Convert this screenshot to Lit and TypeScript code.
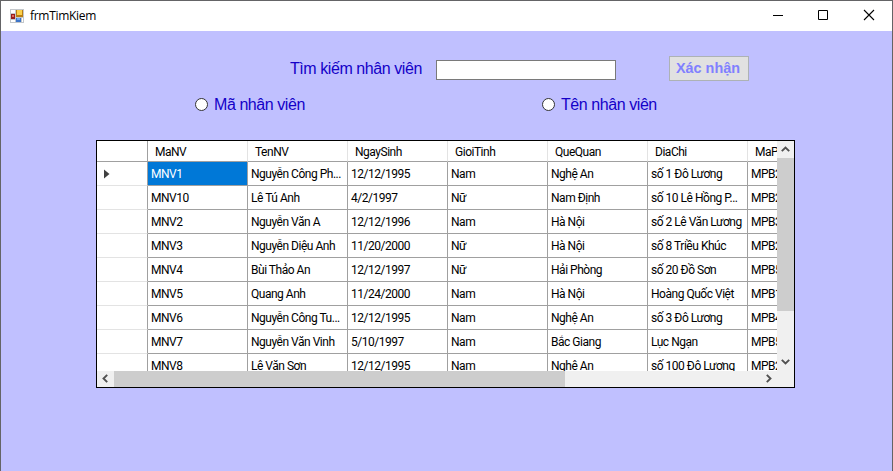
import { LitElement, html, css, svg } from "lit";
import { customElement } from "lit/decorators.js";
import { classMap } from "lit/directives/class-map.js";

const COLUMNS = ["MaNV", "TenNV", "NgaySinh", "GioiTinh", "QueQuan", "DiaChi", "MaPB"];

const ROWS = [
  ["MNV1", "Nguyễn Công Ph...", "12/12/1995", "Nam", "Nghệ An", "số 1 Đô Lương", "MPB2"],
  ["MNV10", "Lê Tú Anh", "4/2/1997", "Nữ", "Nam Định", "số 10 Lê Hồng P...", "MPB2"],
  ["MNV2", "Nguyễn Văn A", "12/12/1996", "Nam", "Hà Nội", "số 2 Lê Văn Lương", "MPB3"],
  ["MNV3", "Nguyễn Diệu Anh", "11/20/2000", "Nữ", "Hà Nội", "số 8 Triều Khúc", "MPB2"],
  ["MNV4", "Bùi Thảo An", "12/12/1997", "Nữ", "Hải Phòng", "số 20 Đồ Sơn", "MPB5"],
  ["MNV5", "Quang Anh", "11/24/2000", "Nam", "Hà Nội", "Hoàng Quốc Việt", "MPB1"],
  ["MNV6", "Nguyễn Công Tu...", "12/12/1995", "Nam", "Nghệ An", "số 3 Đô Lương", "MPB4"],
  ["MNV7", "Nguyễn Văn Vinh", "5/10/1997", "Nam", "Bắc Giang", "Lục Ngạn", "MPB5"],
  ["MNV8", "Lê Văn Sơn", "12/12/1995", "Nam", "Nghệ An", "số 100 Đô Lương", "MPB2"],
];

const CHEVRONS = {
  up: "M4.8 10.2 8.5 6.5l3.7 3.7",
  down: "M4.8 5.8l3.7 3.7 3.7-3.7",
  left: "M10.2 3.8 6.5 7.5l3.7 3.7",
  right: "M6.8 3.8l3.7 3.7-3.7 3.7",
};

@customElement("scroll-arrow")
class ScrollArrow extends LitElement {
  static properties = { dir: { type: String } };
  declare dir: keyof typeof CHEVRONS;
  static styles = css`
    :host { display: block; width: 17px; height: 17px; flex: none; }
    svg { display: block; }
  `;
  render() {
    return html`<svg width="17" height="17" viewBox="0 0 17 17">
      ${svg`<path d=${CHEVRONS[this.dir]} fill="none" stroke="#505050" stroke-width="1.9" />`}
    </svg>`;
  }
}

@customElement("data-grid")
class DataGrid extends LitElement {
  static styles = css`
    :host {
      display: grid;
      grid-template: 230px 16px / 680px 17px;
      width: 699px;
      height: 248px;
      box-sizing: border-box;
      border: 1px solid #000;
      background: #f0f0f0;
      font: 12px/25px Roboto, "Noto Sans", sans-serif;
      letter-spacing: -0.48px;
      color: #000;
    }
    .view { overflow: hidden; background: #fff; }
    .row {
      display: grid;
      grid-template-columns: 51px repeat(7, 100px);
      width: 751px;
      height: 24px;
    }
    .cell, .stub {
      box-sizing: border-box;
      border-right: 1px solid #a0a0a0;
      border-bottom: 1px solid #a0a0a0;
      white-space: nowrap;
      overflow: hidden;
      padding-left: 3px;
    }
    .stub { border-bottom-color: #e3e3e3; display: flex; align-items: center; padding-left: 7px; }
    .selected { background: #0078d7; color: #fff; }
    .head { height: 21px; line-height: 22px; }
    .head .cell { border-right-color: #e3e3e3; padding-left: 7px; }
    .head .stub { border-right-color: #a0a0a0; border-bottom-color: #a0a0a0; }
    .vbar { display: flex; flex-direction: column; }
    .vbar .thumb { height: 153px; }
    .hbar { display: flex; height: 16px; overflow: hidden; }
    .hbar .thumb { width: 451px; }
    .thumb { background: #cdcdcd; }
    .space { flex: 1; }
  `;
  render() {
    return html`
      <div class="view">
        <div class="row head">
          <div class="stub"></div>
          ${COLUMNS.map((c) => html`<div class="cell">${c}</div>`)}
        </div>
        ${ROWS.map(
          (r, i) => html`<div class="row">
            <div class="stub">
              ${i === 0
                ? html`<svg width="6" height="10" viewBox="0 0 6 10"><path d="M0 .5 5.5 5 0 9.5z" fill="#404040" /></svg>`
                : ""}
            </div>
            ${r.map(
              (t, j) => html`<div class=${classMap({ cell: true, selected: i === 0 && j === 0 })}>${t}</div>`
            )}
          </div>`
        )}
      </div>
      <div class="vbar">
        <scroll-arrow dir="up"></scroll-arrow>
        <div class="thumb"></div>
        <div class="space"></div>
        <scroll-arrow dir="down"></scroll-arrow>
      </div>
      <div class="hbar">
        <scroll-arrow dir="left"></scroll-arrow>
        <div class="thumb"></div>
        <div class="space"></div>
        <scroll-arrow dir="right"></scroll-arrow>
      </div>
      <div></div>
    `;
  }
}

@customElement("app-root")
class AppRoot extends LitElement {
  static styles = css`
    :host {
      display: flex;
      flex-direction: column;
      width: 893px;
      height: 471px;
      box-sizing: border-box;
      border: 1px solid #646466;
      border-bottom: 0;
      background: #c0c0ff;
      overflow: hidden;
      font-family: "Liberation Sans", Arial, sans-serif;
    }
    .titlebar {
      display: flex;
      align-items: center;
      height: 30px;
      flex: none;
      background: #fff;
      padding-left: 9px;
    }
    .title {
      flex: 1;
      margin-left: 6px;
      font: 12px/16px "Open Sans", "Noto Sans", sans-serif;
      letter-spacing: -0.3px;
      color: #000;
    }
    .controls { display: flex; }
    .controls svg { display: block; }
    .search {
      display: grid;
      grid-template-columns: 146px 180px 80px;
      align-items: start;
      height: 40px;
      margin: 25px 0 0 289px;
    }
    .label { font-size: 16px; line-height: 26px; letter-spacing: -0.43px; color: #1400c8; white-space: nowrap; }
    .input {
      box-sizing: border-box;
      width: 180px;
      height: 20px;
      margin: 4px 0 0;
      padding: 0 3px;
      border: 1px solid #7a7a7a;
      border-radius: 0;
      background: #fff;
      outline: none;
    }
    .confirm {
      box-sizing: border-box;
      width: 80px;
      height: 25px;
      margin-left: 53px;
      padding: 0 2px 1px 0;
      border: 1px solid #adb2b5;
      border-radius: 0;
      background: #e1e1e1;
      color: #8080ff;
      font: bold 14.4px/22px "Liberation Sans", Arial, sans-serif;
      white-space: nowrap;
    }
    .options { display: flex; height: 24px; margin: -4px 0 0 194px; }
    .option { display: flex; align-items: center; gap: 6px; width: 347px; }
    .option .label { padding-top: 1px; }
    .dot {
      box-sizing: border-box;
      width: 13px;
      height: 13px;
      border: 1px solid #333;
      border-radius: 50%;
      background: #fff;
    }
    data-grid { margin: 24px 0 0 95px; flex: none; }
  `;
  render() {
    return html`
      <div class="titlebar">
        <svg width="14" height="14" viewBox="0 0 14 14">
          <rect width="14" height="14" fill="#c3c7cb" />
          <path d="M1 1h4v3H1zM1 11h4v2H1zM12 9h1v4h-1z" fill="#fff" />
          <rect x="6" y="1" width="7" height="7" fill="#b97e12" />
          <rect x="7" y="1" width="5" height="5" fill="#fbd04b" />
          <rect x="1" y="5" width="4" height="5" fill="#971d1d" />
          <rect x="2" y="6" width="2" height="2" fill="#e36b5c" />
          <rect x="6" y="9" width="5" height="4" fill="#3c74c9" />
          <rect x="7" y="9" width="3" height="2" fill="#75a8ee" />
        </svg>
        <div class="title">frmTimKiem</div>
        <div class="controls">
          <svg width="137" height="30" viewBox="0 0 137 30" fill="none" stroke="#000">
            <path d="M18 14.5h10M63.500 9.500h9v9h-9z" />
            <path d="M109 9l10 10M119 9l-10 10" stroke-width="1.1" />
          </svg>
        </div>
      </div>
      <div class="search">
        <div class="label">Tìm kiếm nhân viên</div>
        <input class="input" />
        <button class="confirm" disabled>Xác nhận</button>
      </div>
      <div class="options">
        <div class="option"><span class="dot"></span><span class="label">Mã nhân viên</span></div>
        <div class="option"><span class="dot"></span><span class="label">Tên nhân viên</span></div>
      </div>
      <data-grid></data-grid>
    `;
  }
}
